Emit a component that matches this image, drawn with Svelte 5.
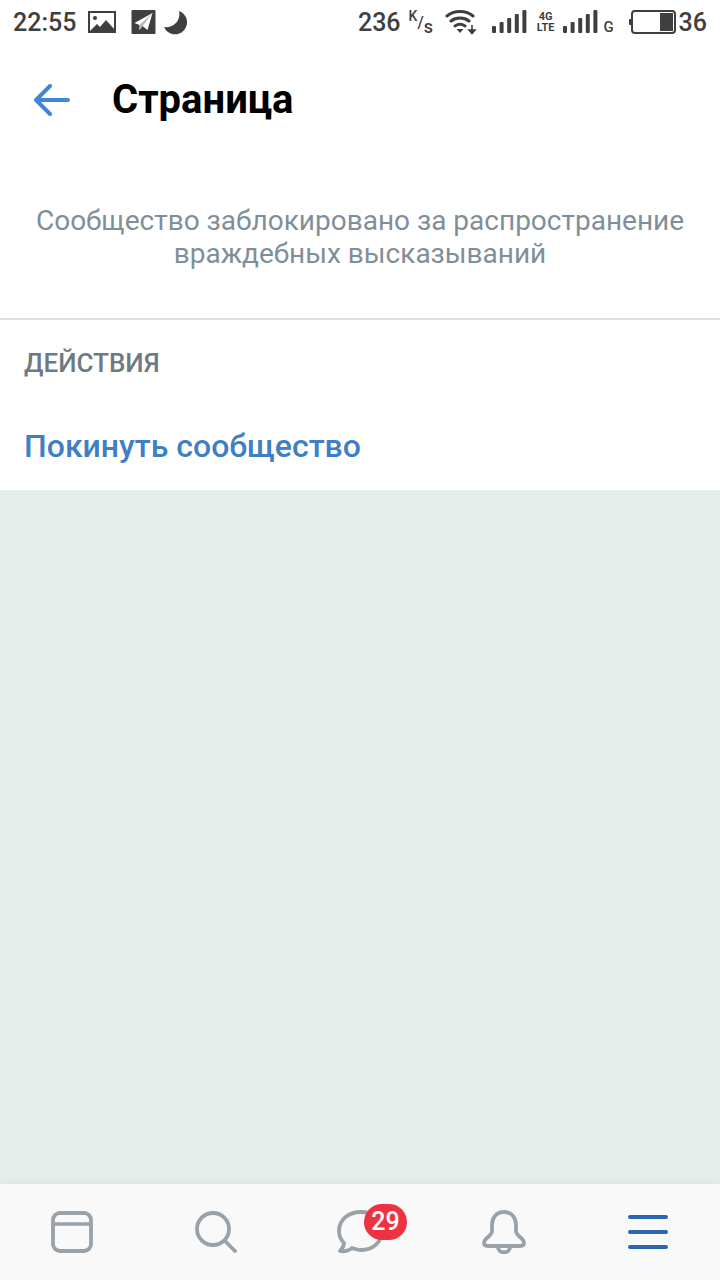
<script>
    const tabs = ["feed", "search", "messages", "bell", "menu"];
    const bars = [7, 11, 15, 19, 23];
</script>

<div class="page">
    <div class="statusbar">
        <div class="side">
            <span class="time">22:55</span>
            <svg class="pic" width="28" height="22" viewBox="0 0 28 22">
                <rect x="1" y="1" width="26" height="20" fill="none" stroke="#3f3f3f" stroke-width="2"/>
                <path d="M1 21 L9 13 L12 16 L18 9 L27 19 V21Z" fill="#3f3f3f"/>
                <circle cx="7" cy="7" r="2" fill="#3f3f3f"/>
            </svg>
            <svg class="tg" width="25" height="24" viewBox="0 0 24 24">
                <rect width="24" height="24" rx="1" fill="#3f3f3f"/>
                <path d="M3 13 L21 3 L16 20 L11 16 L8 20 L8 15Z" fill="#fff"/>
                <path d="M8 15 L21 3 L11 16 L8 20Z" fill="#b5b5b5"/>
            </svg>
            <svg class="moon" width="25" height="25" viewBox="0 0 25 25">
                <path d="M16 1 A12 12 0 1 1 1 17 A13 13 0 0 0 16 1Z" fill="#3f3f3f"/>
            </svg>
        </div>
        <div class="side right">
            <span class="speed">236</span>
            <span class="unit"><sup>K</sup>/<sub>s</sub></span>
            <svg class="wifi" width="32" height="26" viewBox="0 0 32 26">
                <path d="M2 7 C9 1 21 1 28 7 M6 12 C11 8 19 8 24 12 M10 17 C13 15 17 15 20 17" fill="none" stroke="#3f3f3f" stroke-width="3" stroke-linecap="round"/>
                <path d="M11.5 20 H18.5 L15 24Z" fill="#3f3f3f"/>
                <path d="M27 16 V22 M24 21 H30 L27 24.5Z" stroke="#3f3f3f" stroke-width="1.6" fill="#3f3f3f"/>
            </svg>
            <svg class="signal" width="36" height="24" viewBox="0 0 36 24">
                {#each bars as h, i}
                    <rect x={i * 7.6} y={23 - h} width="4" height={h} rx="1" fill="#3f3f3f"/>
                {/each}
            </svg>
            <span class="net"><b>4G</b><b>LTE</b></span>
            <svg class="signal" width="36" height="24" viewBox="0 0 36 24">
                {#each bars as h, i}
                    <rect x={i * 7.6} y={23 - h} width="4" height={h} rx="1" fill="#3f3f3f"/>
                {/each}
            </svg>
            <span class="g">G</span>
            <span class="tip"></span>
            <span class="battery"><span class="charge"></span></span>
            <span class="level">36</span>
        </div>
    </div>

    <header class="topbar">
        <svg class="back" width="36" height="32" viewBox="0 0 36 32">
            <path d="M2 16 H34 M16 2 L2 16 L16 30" fill="none" stroke="#4186d8" stroke-width="4" stroke-linecap="round" stroke-linejoin="round"/>
        </svg>
        <h1>Страница</h1>
    </header>

    <section class="info">
        <p>Сообщество заблокировано за распространение враждебных высказываний</p>
    </section>

    <section class="actions">
        <h2>ДЕЙСТВИЯ</h2>
        <a href="#leave">Покинуть сообщество</a>
    </section>

    <div class="filler"></div>

    <nav class="tabbar">
        {#each tabs as tab}
            <div class="tab">
                {#if tab === "feed"}
                    <svg width="42" height="42" viewBox="0 0 42 42">
                        <rect x="2" y="2" width="38" height="38" rx="7" fill="none" stroke="#99a2a9" stroke-width="3.8"/>
                        <path d="M2 13 H40" stroke="#99a2a9" stroke-width="3.6"/>
                    </svg>
                {:else if tab === "search"}
                    <svg width="42" height="42" viewBox="0 0 42 42">
                        <circle cx="18" cy="18" r="16" fill="none" stroke="#99a2a9" stroke-width="3.8"/>
                        <path d="M30 30 L40 40" stroke="#99a2a9" stroke-width="3.8" stroke-linecap="round"/>
                    </svg>
                {:else if tab === "messages"}
                    <svg width="46" height="44" viewBox="0 0 46 44">
                        <path d="M24 2 C11 2 2 10 2 21 C2 26 4 30 7 33 C7 37 5 39 3 41 C8 42 13 40 15 38 C18 39 21 40 24 40 C36 40 45 32 45 21 C45 10 36 2 24 2Z" fill="none" stroke="#99a2a9" stroke-width="3.8" stroke-linejoin="round"/>
                    </svg>
                    <span class="badge">29</span>
                {:else if tab === "bell"}
                    <svg width="44" height="44" viewBox="0 0 44 44">
                        <path d="M22 2 C14 2 10 8 10 15 V21 C10 26 2 28 2 33 C2 35 3 36 6 36 H38 C41 36 42 35 42 33 C42 28 34 26 34 21 V15 C34 8 30 2 22 2Z" fill="none" stroke="#99a2a9" stroke-width="3.8" stroke-linejoin="round"/>
                        <path d="M16 37 C16 44 28 44 28 37" fill="none" stroke="#99a2a9" stroke-width="3.8"/>
                    </svg>
                {:else}
                    <div class="burger"><i></i><i></i><i></i></div>
                {/if}
            </div>
        {/each}
    </nav>
</div>

<style>
    :global(body) {
        margin: 0;
    }
    .page {
        width: 720px;
        height: 1280px;
        display: flex;
        flex-direction: column;
        background: #fff;
        font-family: Roboto, "Liberation Sans", sans-serif;
        overflow: hidden;
    }
    .statusbar {
        height: 44px;
        flex: none;
        display: flex;
        align-items: center;
        justify-content: space-between;
        padding: 0 13px;
        color: #3f3f3f;
    }
    .side {
        display: flex;
        align-items: center;
    }
    .time {
        font-size: 25px;
        font-weight: 500;
        width: 75px;
    }
    .moon {
        margin-left: 7px;
    }
    .tg {
        margin-left: 15px;
    }
    .speed {
        font-size: 25px;
        font-weight: 500;
    }
    .unit {
        font-size: 16px;
        font-weight: 500;
        margin: 0 14px 0 8px;
        width: 22px;
        white-space: nowrap;
    }
    .unit sup {
        font-size: 14px;
        vertical-align: 7px;
        line-height: 0;
    }
    .unit sub {
        font-size: 18px;
        vertical-align: -5px;
        line-height: 0;
    }
    .signal {
        margin-left: 15px;
    }
    .net {
        display: flex;
        flex-direction: column;
        font-size: 11px;
        line-height: 11px;
        margin-left: 8px;
        width: 20px;
        align-items: center;
    }
    .net b {
        font-weight: 700;
    }
    .net + .signal {
        margin-left: 7px;
    }
    .g {
        font-size: 15px;
        font-weight: 500;
        margin: 10px 0 0 5px;
        width: 14px;
    }
    .tip {
        width: 3px;
        height: 6px;
        background: #3f3f3f;
        margin-left: 11px;
        border-radius: 1px 0 0 1px;
    }
    .battery {
        width: 39px;
        height: 18px;
        border: 2px solid #3f3f3f;
        border-radius: 4px;
        padding: 1px;
        display: flex;
        justify-content: flex-end;
        background: #fff;
        margin-left: -1px;
    }
    .charge {
        width: 13px;
        background: #3f3f3f;
    }
    .level {
        font-size: 25px;
        font-weight: 500;
        margin-left: 3px;
    }
    .topbar {
        height: 112px;
        flex: none;
        display: flex;
        align-items: center;
        padding-left: 34px;
        box-sizing: border-box;
    }
    .back {
        flex: none;
        margin-right: 42px;
    }
    h1 {
        margin: 0;
        font-size: 40px;
        font-weight: 700;
        color: #000;
        position: relative;
        top: -1px;
    }
    .info {
        height: 164px;
        flex: none;
        box-sizing: border-box;
        padding-top: 48px;
        border-bottom: 2px solid #dde0e3;
    }
    .info p {
        margin: 0 auto;
        width: 680px;
        text-align: center;
        font-size: 28px;
        line-height: 33px;
        color: #7f8f99;
    }
    .actions {
        height: 170px;
        flex: none;
        box-sizing: border-box;
        padding: 26px 24px 0;
    }
    h2 {
        margin: 0;
        font-size: 26px;
        line-height: 34px;
        font-weight: 500;
        color: #6e7a82;
    }
    .actions a {
        display: block;
        margin-top: 48px;
        font-size: 32px;
        line-height: 36px;
        font-weight: 500;
        color: #3f80c4;
        text-decoration: none;
    }
    .filler {
        flex: 1;
        background: #e6ecea;
    }
    .tabbar {
        height: 96px;
        flex: none;
        display: flex;
        justify-content: space-between;
        padding: 0 29px;
        background: #f9f9f9;
        box-shadow: 0 -1px 5px rgba(0, 0, 0, 0.05);
    }
    .tab {
        position: relative;
        width: 86px;
        display: flex;
        align-items: center;
        justify-content: center;
    }
    .badge {
        position: absolute;
        top: 20px;
        left: 47px;
        width: 43px;
        height: 36px;
        border-radius: 18px;
        background: #ed3242;
        color: #fff;
        font-size: 25px;
        font-weight: 500;
        line-height: 36px;
        text-align: center;
    }
    .burger {
        width: 40px;
        display: flex;
        flex-direction: column;
        gap: 11px;
    }
    .burger i {
        height: 4px;
        border-radius: 2px;
        background: #2a66b2;
    }
</style>
